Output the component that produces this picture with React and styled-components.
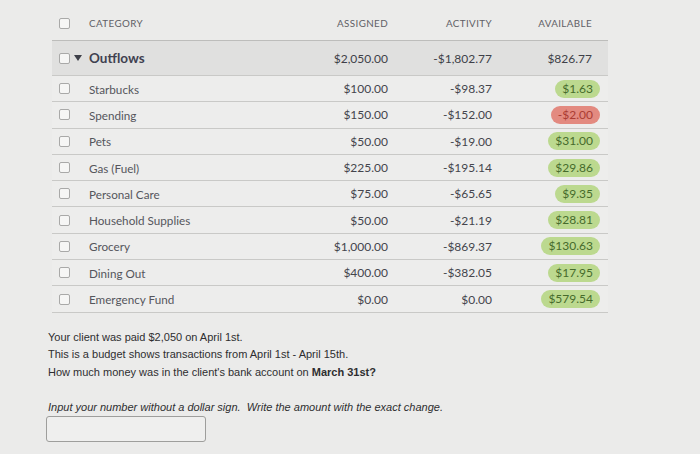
import React from "react";
import styled, { createGlobalStyle } from "styled-components";

const GlobalStyle = createGlobalStyle`
  html, body {
    margin: 0;
    padding: 0;
    background: #ebebea;
  }
`;

const rows = [
  { name: "Starbucks", assigned: "$100.00", activity: "-$98.37", available: "$1.63" },
  { name: "Spending", assigned: "$150.00", activity: "-$152.00", available: "-$2.00", negative: true },
  { name: "Pets", assigned: "$50.00", activity: "-$19.00", available: "$31.00" },
  { name: "Gas (Fuel)", assigned: "$225.00", activity: "-$195.14", available: "$29.86" },
  { name: "Personal Care", assigned: "$75.00", activity: "-$65.65", available: "$9.35" },
  { name: "Household Supplies", assigned: "$50.00", activity: "-$21.19", available: "$28.81" },
  { name: "Grocery", assigned: "$1,000.00", activity: "-$869.37", available: "$130.63" },
  { name: "Dining Out", assigned: "$400.00", activity: "-$382.05", available: "$17.95" },
  { name: "Emergency Fund", assigned: "$0.00", activity: "$0.00", available: "$579.54" },
];

function App() {
  return (
    <>
      <GlobalStyle />
      <Page>
        <Table>
          <HeaderRow>
            <CheckCell>
              <Box />
            </CheckCell>
            <HeadLabel>Category</HeadLabel>
            <HeadLabel $right>Assigned</HeadLabel>
            <HeadLabel $right>Activity</HeadLabel>
            <HeadLabel $right>Available</HeadLabel>
          </HeaderRow>

          <GroupRow>
            <CheckCell>
              <Box />
              <Caret />
            </CheckCell>
            <GroupName>Outflows</GroupName>
            <GroupAmount>$2,050.00</GroupAmount>
            <GroupAmount>-$1,802.77</GroupAmount>
            <GroupAmount>$826.77</GroupAmount>
          </GroupRow>

          {rows.map((row) => (
            <Row key={row.name}>
              <CheckCell>
                <Box />
              </CheckCell>
              <Name>{row.name}</Name>
              <Amount>{row.assigned}</Amount>
              <Amount>{row.activity}</Amount>
              <PillCell>
                <Pill $negative={row.negative}>{row.available}</Pill>
              </PillCell>
            </Row>
          ))}
        </Table>

        <Question>
          <p>Your client was paid $2,050 on April 1st.</p>
          <p>This is a budget shows transactions from April 1st - April 15th.</p>
          <p>
            How much money was in the client's bank account on{" "}
            <strong>March 31st?</strong>
          </p>
        </Question>

        <Hint>
          Input your number without a dollar sign.&nbsp; Write the amount with
          the exact change.
        </Hint>
        <AnswerInput type="text" />
      </Page>
    </>
  );
}

const Page = styled.div`
  width: 700px;
  height: 454px;
  overflow: hidden;
  padding-top: 6px;
  box-sizing: border-box;
`;

const Table = styled.div`
  margin-left: 52px;
  width: 556px;
  font-family: Lato, "Open Sans", sans-serif;
`;

const RowBase = styled.div`
  display: grid;
  grid-template-columns: 37px 190px 109px 104px 100px 16px;
  align-items: center;
  border-bottom: 1px solid #c9c9c7;
`;

const HeaderRow = styled(RowBase)`
  height: 34px;
  border-bottom: 1.5px solid #bdbdbb;
`;

const GroupRow = styled(RowBase)`
  height: 34px;
  background: #e0e0df;
`;

const Row = styled(RowBase)`
  height: 25.3px;
  background: #ededec;
`;

const CheckCell = styled.div`
  display: flex;
  align-items: center;
  gap: 4px;
  padding-left: 7px;
`;

const Box = styled.span`
  width: 9px;
  height: 9px;
  border: 1px solid #a9a9a8;
  border-radius: 2px;
  background: #f6f6f5;
`;

const Caret = styled.span`
  width: 0;
  height: 0;
  border-left: 4px solid transparent;
  border-right: 4px solid transparent;
  border-top: 6px solid #3e4049;
`;

const HeadLabel = styled.div`
  font-size: 9.8px;
  letter-spacing: 0.4px;
  text-transform: uppercase;
  color: #5f6066;
  text-align: ${(p) => (p.$right ? "right" : "left")};
`;

const GroupName = styled.div`
  font-size: 13.5px;
  font-weight: 700;
  color: #3f4150;
`;

const GroupAmount = styled.div`
  font-size: 12px;
  color: #3e3f48;
  text-align: right;
`;

const Name = styled.div`
  font-size: 11.7px;
  color: #55565c;
`;

const Amount = styled.div`
  font-size: 12px;
  color: #44454d;
  text-align: right;
`;

const PillCell = styled.div`
  display: flex;
  justify-content: flex-end;
  margin-right: -8px;
`;

const Pill = styled.span`
  font-size: 12px;
  line-height: 18px;
  padding: 0 7px;
  border-radius: 9px;
  background: ${(p) => (p.$negative ? "#e38a80" : "#bcd98f")};
  color: ${(p) => (p.$negative ? "#ab3c33" : "#466b2c")};
`;

const Question = styled.div`
  margin: 16px 0 0 48px;
  font-family: "Liberation Sans", Arial, sans-serif;
  font-size: 11px;
  color: #2e2e30;

  p {
    margin: 0;
    line-height: 17.5px;
  }

  strong {
    font-weight: 700;
  }
`;

const Hint = styled.p`
  margin: 19px 0 0 48px;
  font-family: "Liberation Sans", Arial, sans-serif;
  font-size: 11px;
  font-style: italic;
  color: #2e2e30;
  line-height: 14px;
`;

const AnswerInput = styled.input`
  display: block;
  margin: 2px 0 0 46px;
  width: 160px;
  height: 26px;
  box-sizing: border-box;
  border: 1px solid #9e9e9c;
  border-radius: 3px;
  background: #efefee;
`;

export default App;
